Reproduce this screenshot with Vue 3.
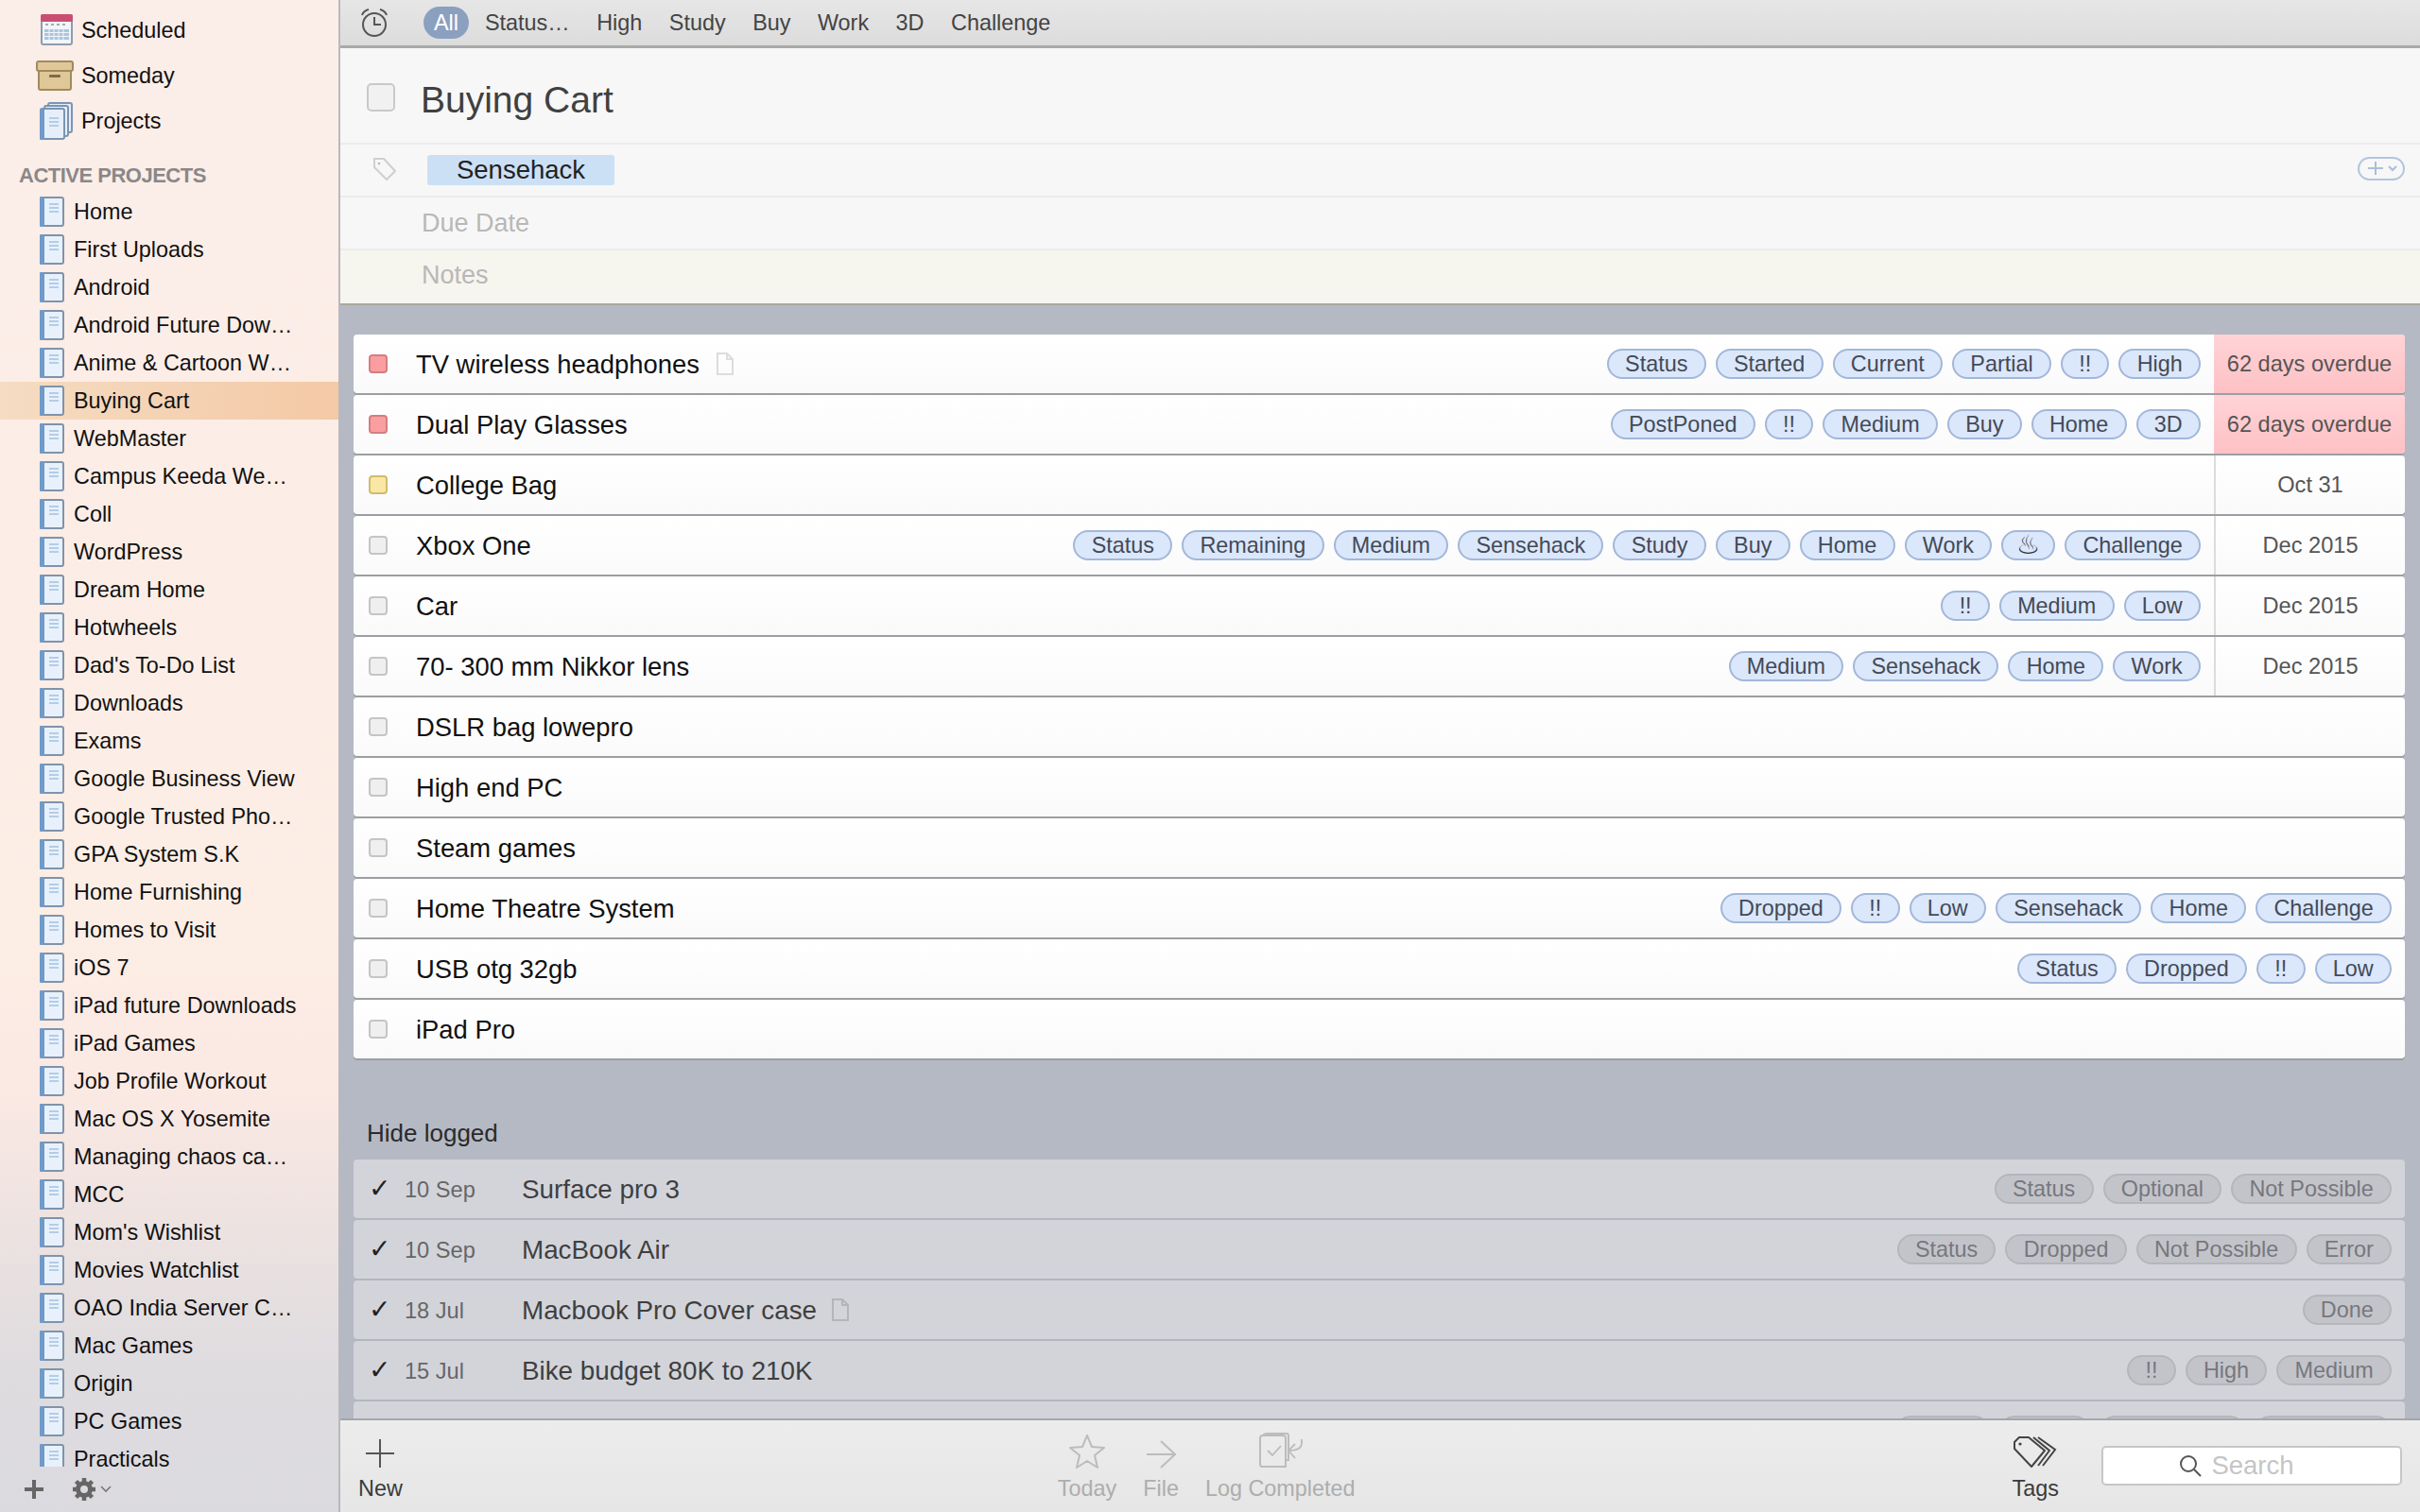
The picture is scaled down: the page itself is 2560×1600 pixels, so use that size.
<script setup>
const projects = [
  "Home", "First Uploads", "Android", "Android Future Dow…", "Anime & Cartoon W…", "Buying Cart", "WebMaster",
  "Campus Keeda We…", "Coll", "WordPress", "Dream Home", "Hotwheels", "Dad's To-Do List", "Downloads", "Exams",
  "Google Business View", "Google Trusted Pho…", "GPA System S.K", "Home Furnishing", "Homes to Visit", "iOS 7",
  "iPad future Downloads", "iPad Games", "Job Profile Workout", "Mac OS X Yosemite", "Managing chaos ca…", "MCC",
  "Mom's Wishlist", "Movies Watchlist", "OAO India Server C…", "Mac Games", "Origin", "PC Games", "Practicals",
];

const filters = ["Status…", "High", "Study", "Buy", "Work", "3D", "Challenge"];

const todos = [
  { title: "TV wireless headphones", note: true, box: "red", date: "62 days overdue", overdue: true, tags: ["Status", "Started", "Current", "Partial", "!!", "High"] },
  { title: "Dual Play Glasses", box: "red", date: "62 days overdue", overdue: true, tags: ["PostPoned", "!!", "Medium", "Buy", "Home", "3D"] },
  { title: "College Bag", box: "yellow", date: "Oct 31", tags: [] },
  { title: "Xbox One", date: "Dec 2015", tags: ["Status", "Remaining", "Medium", "Sensehack", "Study", "Buy", "Home", "Work", "♨", "Challenge"] },
  { title: "Car", date: "Dec 2015", tags: ["!!", "Medium", "Low"] },
  { title: "70- 300 mm Nikkor lens", date: "Dec 2015", tags: ["Medium", "Sensehack", "Home", "Work"] },
  { title: "DSLR bag lowepro", tags: [] },
  { title: "High end PC", tags: [] },
  { title: "Steam games", tags: [] },
  { title: "Home Theatre System", tags: ["Dropped", "!!", "Low", "Sensehack", "Home", "Challenge"] },
  { title: "USB otg 32gb", tags: ["Status", "Dropped", "!!", "Low"] },
  { title: "iPad Pro", tags: [] },
];

const logged = [
  { day: "10 Sep", title: "Surface pro 3", tags: ["Status", "Optional", "Not Possible"] },
  { day: "10 Sep", title: "MacBook Air", tags: ["Status", "Dropped", "Not Possible", "Error"] },
  { day: "18 Jul", title: "Macbook Pro Cover case", note: true, tags: ["Done"] },
  { day: "15 Jul", title: "Bike budget 80K to 210K", tags: ["!!", "High", "Medium"] },
];

// last logged row is cut off by the bottom bar, only the pill tops show
const cutOffPills = [100, 96, 154, 145];
</script>

<template>
  <div class="app">
    <aside class="sidebar">
      <div class="side-scroll">
        <div class="smart-item">
          <svg class="smart-icon" width="36" height="34" viewBox="0 0 36 34">
            <rect x="2" y="1" width="32" height="31" rx="2" fill="#f2f5f9" stroke="#8d9db0" stroke-width="2" />
            <rect x="1" y="0" width="34" height="8" rx="2" fill="#c94f72" />
            <path d="M6 11h24" stroke="#a9a9a9" stroke-width="2" stroke-dasharray="3 3" />
            <path d="M5 16h26v11H5z" fill="#a9c5e4" />
            <path d="M5 19.5h26M5 23.5h26M10 16v11M15 16v11M20 16v11M25 16v11" stroke="#f2f5f9" stroke-width="1" />
          </svg>
          <span>Scheduled</span>
        </div>
        <div class="smart-item">
          <svg class="crate" width="40" height="32" viewBox="0 0 40 32">
            <rect x="3" y="8" width="34" height="23" rx="2" fill="#dfc797" stroke="#a08a5f" stroke-width="2" />
            <rect x="1" y="1" width="38" height="10" rx="2" fill="#dfc797" stroke="#a08a5f" stroke-width="2" />
            <rect x="14" y="15" width="12" height="3" rx="1" fill="#7f6b45" />
          </svg>
          <span>Someday</span>
        </div>
        <div class="smart-item">
          <svg class="smart-icon" width="36" height="40" viewBox="0 0 36 40">
            <rect x="9" y="1" width="25" height="31" rx="2" fill="#e6eff9" stroke="#7c94b2" stroke-width="2" />
            <rect x="5" y="4" width="25" height="32" rx="2" fill="#e6eff9" stroke="#7c94b2" stroke-width="2" />
            <rect x="1" y="7" width="25" height="32" rx="2" fill="#e6eff9" stroke="#7c94b2" stroke-width="2" />
            <rect x="0" y="7" width="5" height="33" rx="1" fill="#6f9ac9" />
            <path d="M10 17h10M10 21h10M10 25h10" stroke="#b3cde8" stroke-width="2" />
          </svg>
          <span>Projects</span>
        </div>
        <div class="side-heading">ACTIVE PROJECTS</div>
        <div v-for="name in projects" :key="name" class="project" :class="{ selected: name === 'Buying Cart' }">
          <svg width="26" height="32" viewBox="0 0 26 32">
            <rect x="1" y="1" width="24" height="30" rx="2" fill="#e8f1fb" stroke="#7f93ab" stroke-width="2" />
            <rect x="0" y="0" width="5" height="32" rx="1" fill="#6f9ac9" />
            <path d="M10 8h10M10 12h10M10 16h10" stroke="#b3cde8" stroke-width="2" />
          </svg>
          <span>{{ name }}</span>
        </div>
      </div>
      <div class="side-foot">
        <svg width="22" height="22" viewBox="0 0 22 22"><path d="M11 1v20M1 11h20" stroke="#666" stroke-width="4" /></svg>
        <svg class="gear" width="26" height="26" viewBox="0 0 26 26">
          <circle cx="13" cy="13" r="6.5" fill="none" stroke="#666" stroke-width="5" />
          <path d="M13 1v5M13 20v5M1 13h5M20 13h5M4.5 4.5l3.6 3.6M17.9 17.9l3.6 3.6M21.5 4.5l-3.6 3.6M8.1 17.9l-3.6 3.6" stroke="#666" stroke-width="4.5" />
        </svg>
        <svg width="12" height="8" viewBox="0 0 12 8"><path d="M1 1l5 5 5-5" fill="none" stroke="#777" stroke-width="1.6" /></svg>
      </div>
    </aside>

    <main class="main">
      <div class="toolbar">
        <svg class="alarm" width="32" height="30" viewBox="0 0 32 30">
          <circle cx="16" cy="17" r="12" fill="none" stroke="#555" stroke-width="2" />
          <path d="M16 9v8h7M3 7c1-3 3-5 7-6M29 7c-1-3-3-5-7-6" fill="none" stroke="#555" stroke-width="2" />
        </svg>
        <span class="filter active">All</span>
        <span v-for="f in filters" :key="f" class="filter">{{ f }}</span>
      </div>

      <section class="head">
        <div class="title-row">
          <span class="big-check"></span>
          <h1>Buying Cart</h1>
        </div>
        <div class="field tag-field">
          <svg class="tag-icon" width="26" height="26" viewBox="0 0 26 26">
            <path d="M2 2h10l12 13-9 9L2 11z" fill="none" stroke="#cfcfcf" stroke-width="2" stroke-linejoin="round" />
            <circle cx="7" cy="7" r="1.3" fill="#bbb" />
          </svg>
          <span class="token">Sensehack</span>
          <span class="add-tag">
            <svg width="20" height="16" viewBox="0 0 20 16"><path d="M10 1v14M2 8h16" stroke="#a9bedb" stroke-width="2" /></svg>
            <svg width="10" height="7" viewBox="0 0 10 7"><path d="M1 1l4 4 4-4" fill="none" stroke="#a9bedb" stroke-width="2" /></svg>
          </span>
        </div>
        <div class="field">Due Date</div>
        <div class="field notes">Notes</div>
      </section>

      <div class="content">
        <div class="todo-list">
          <div v-for="todo in todos" :key="todo.title" class="todo">
            <span class="box" :class="todo.box"></span>
            <span class="todo-title">{{ todo.title }}</span>
            <svg v-if="todo.note" class="note" width="18" height="24" viewBox="0 0 18 24">
              <path d="M1 1h10l6 6v16H1zM11 1v6h6" fill="none" stroke="#dcdcdc" stroke-width="2" />
            </svg>
            <div class="tags">
              <span v-for="t in todo.tags" :key="t" class="pill" :class="{ hot: t === '♨' }">{{ t }}</span>
            </div>
            <div v-if="todo.date" class="due" :class="{ overdue: todo.overdue }">{{ todo.date }}</div>
          </div>
        </div>

        <div class="hide-logged">Hide logged</div>
        <div class="logged-list">
          <div v-for="item in logged" :key="item.title" class="logged">
            <span class="tick">✓</span>
            <span class="day">{{ item.day }}</span>
            <span class="logged-title">{{ item.title }}</span>
            <svg v-if="item.note" class="note" width="18" height="24" viewBox="0 0 18 24">
              <path d="M1 1h10l6 6v16H1zM11 1v6h6" fill="none" stroke="#b4b5ba" stroke-width="2" />
            </svg>
            <div class="tags">
              <span v-for="t in item.tags" :key="t" class="pill">{{ t }}</span>
            </div>
          </div>
          <div class="logged">
            <div class="tags">
              <span v-for="w in cutOffPills" :key="w" class="pill" :style="{ width: w + 'px' }"></span>
            </div>
          </div>
        </div>
      </div>

      <div class="bottom">
        <div class="tool tool-new">
          <svg width="32" height="32" viewBox="0 0 32 32"><path d="M16 1v30M1 16h30" stroke="#555" stroke-width="2" /></svg>
          <span>New</span>
        </div>
        <div class="mid-tools">
          <div class="tool off">
            <svg width="38" height="36" viewBox="0 0 38 36">
              <path d="M19 1l5 12 13 1-10 8 3 13-11-7-11 7 3-13-10-8 13-1z" fill="none" stroke="#bcbcbc" stroke-width="2" stroke-linejoin="round" />
            </svg>
            <span>Today</span>
          </div>
          <div class="tool off">
            <svg width="32" height="30" viewBox="0 0 32 30"><path d="M1 15h30M16 1l15 14-15 14" fill="none" stroke="#bcbcbc" stroke-width="2" /></svg>
            <span>File</span>
          </div>
          <div class="tool off">
            <svg width="48" height="38" viewBox="0 0 48 38">
              <path d="M3 6q0-3 3-3h21q3 0 3 3v30H5q-2 0-2-3z" fill="none" stroke="#bcbcbc" stroke-width="2" />
              <path d="M6 3q1-2 4-2h21q2 0 2 2v26h-3" fill="none" stroke="#bcbcbc" stroke-width="2" />
              <path d="M11 19l5 5 9-10" fill="none" stroke="#bcbcbc" stroke-width="1.8" />
              <path d="M47 7v4q0 8-14 8M40 12l-7 7 7 8" fill="none" stroke="#bcbcbc" stroke-width="1.8" />
            </svg>
            <span>Log Completed</span>
          </div>
        </div>
        <div class="tool tool-tags">
          <svg width="46" height="34" viewBox="0 0 46 34">
            <path d="M1 6l5-5h10l17 14-14 17L1 13z" fill="none" stroke="#444" stroke-width="2" stroke-linejoin="round" />
            <path d="M21 1l17 14-12 16M26 1l18 13-13 17" fill="none" stroke="#444" stroke-width="2" />
            <circle cx="7" cy="8" r="1.6" fill="#444" />
          </svg>
          <span>Tags</span>
        </div>
        <div class="search">
          <svg width="24" height="24" viewBox="0 0 24 24">
            <circle cx="10" cy="10" r="8" fill="none" stroke="#555" stroke-width="2" />
            <path d="M16 16l7 7" stroke="#555" stroke-width="2" />
          </svg>
          <span>Search</span>
        </div>
      </div>
    </main>
  </div>
</template>

<style>
html,
body {
  margin: 0;
  background: #fff;
}
</style>

<style scoped>
.app {
  width: 2560px;
  height: 1600px;
  display: flex;
  overflow: hidden;
  font-family: "Liberation Sans", Arial, sans-serif;
  font-size: 23.4px;
}

/* sidebar */
.sidebar {
  width: 358px;
  flex: none;
  display: flex;
  flex-direction: column;
  border-right: 2px solid #b9b9bb;
  background: linear-gradient(180deg, #fbede8 0%, #fceee5 60%, #fbe9e3 72%, #dfdcdf 90%, #dbdadf 100%);
  box-sizing: content-box;
}

.side-scroll {
  height: 1552px;
  overflow: hidden;
  padding-top: 8px;
  box-sizing: border-box;
}

.smart-item {
  height: 48px;
  display: flex;
  align-items: center;
  padding-left: 42px;
  color: #111;
}

.smart-item span {
  margin-left: 8px;
}

.smart-icon {
  flex: none;
  width: 36px;
}

.crate {
  flex: none;
  margin-left: -4px;
}

.side-heading {
  margin-top: 16px;
  height: 36px;
  line-height: 36px;
  padding-left: 20px;
  font-size: 22px;
  font-weight: 700;
  letter-spacing: -0.5px;
  color: #8a8787;
}

.project {
  height: 40px;
  display: flex;
  align-items: center;
  gap: 10px;
  padding-left: 42px;
  color: #111;
  white-space: nowrap;
}

.project.selected {
  background: linear-gradient(90deg, #f5dcc2, #f4c9a6);
}

.side-foot {
  flex: 1;
  display: flex;
  align-items: center;
  padding-left: 25px;
}

.gear {
  margin-left: 29px;
}

.side-foot svg:last-child {
  margin-left: 4px;
}

/* main column */
.main {
  flex: 1;
  min-width: 0;
  display: flex;
  flex-direction: column;
}

.toolbar {
  height: 48px;
  flex: none;
  display: flex;
  align-items: center;
  padding-left: 20px;
  background: linear-gradient(180deg, #e6e6e6, #dcdcdc);
  border-bottom: 3px solid #a9a9aa;
  color: #444;
}

.alarm {
  margin-right: 36px;
}

.filter {
  margin-right: 28.5px;
}

.filter.active {
  margin-right: 17px;
  width: 48px;
  height: 34px;
  line-height: 34px;
  text-align: center;
  border-radius: 17px;
  background: #8ba0bf;
  color: #fff;
}

.head {
  flex: none;
  background: #f7f7f7;
  border-bottom: 2px solid #a9a89f;
}

.title-row {
  height: 102px;
  display: flex;
  align-items: center;
  padding: 4px 0 0 28px;
  border-bottom: 2px solid #ececec;
  box-sizing: border-box;
}

.big-check {
  width: 30px;
  height: 30px;
  box-sizing: border-box;
  border: 2px solid #c9c9c9;
  border-radius: 5px;
  background: #f1f1f1;
  margin-right: 27px;
}

h1 {
  margin: 6px 0 0;
  font-size: 39px;
  font-weight: 400;
  color: #404040;
}

.field {
  height: 56px;
  display: flex;
  align-items: center;
  padding-left: 86px;
  font-size: 27px;
  color: #b8b8b8;
  border-bottom: 2px solid #ececec;
  box-sizing: border-box;
}

.field.notes {
  padding-bottom: 4px;
  background: #f6f5ee;
  border-bottom: none;
}

.tag-field {
  padding-left: 34px;
}

.tag-icon {
  margin: 0 32px 3px 0;
}

.token {
  width: 198px;
  height: 32px;
  line-height: 32px;
  text-align: center;
  font-size: 27.5px;
  color: #222;
  background: #cbe0f5;
  border-radius: 3px;
}

.add-tag {
  margin: 0 16px 4px auto;
  width: 50px;
  height: 25px;
  box-sizing: border-box;
  display: flex;
  align-items: center;
  justify-content: center;
  gap: 3px;
  border: 2px solid #b2c5de;
  border-radius: 13px;
}

.content {
  flex: 1;
  min-height: 0;
  overflow: hidden;
  padding: 31px 16px 0 14px;
  background: #b5b9c4;
}

.todo-list,
.logged-list {
  display: flex;
  flex-direction: column;
  gap: 2px;
}

.todo {
  height: 62px;
  display: flex;
  align-items: center;
  padding-left: 16px;
  background: linear-gradient(180deg, #fff, #fafafa);
  border-radius: 4px;
  box-shadow: 0 2px 0 #9d9ea3;
  font-size: 27.4px;
  color: #111;
}

.todo-title {
  margin-top: 2px;
}

.box {
  width: 20px;
  height: 20px;
  flex: none;
  box-sizing: border-box;
  border: 2px solid #c5c5c5;
  border-radius: 4px;
  background: #efefef;
  margin-right: 30px;
}

.box.red {
  background: #fb9ea0;
  border-color: #d37e80;
}

.box.yellow {
  background: #fbe7a4;
  border-color: #cfbb6e;
}

.note {
  margin-left: 18px;
  flex: none;
}

.tags {
  margin-left: auto;
  display: flex;
  gap: 10px;
  padding-right: 14px;
}

.pill {
  height: 32px;
  line-height: 28px;
  box-sizing: border-box;
  padding: 0 17.25px;
  border: 2px solid #a3b7d9;
  border-radius: 16px;
  background: #dbe7fb;
  font-size: 23.4px;
  color: #434a57;
}

.pill.hot {
  padding: 0 14px;
  font-size: 28px;
  color: #2f3540;
}

.due {
  width: 202px;
  height: 100%;
  flex: none;
  display: flex;
  align-items: center;
  justify-content: center;
  border-left: 2px solid #dcdcdc;
  box-sizing: border-box;
  border-radius: 0 4px 4px 0;
  font-size: 23.6px;
  color: #555;
}

.due.overdue {
  border-left: none;
  background: linear-gradient(180deg, #ffd3d6, #fdc1c5);
}

.hide-logged {
  margin-top: 64px;
  height: 43px;
  padding-left: 14px;
  font-size: 26px;
  color: #2a2a2a;
}

.logged {
  height: 62px;
  flex: none;
  display: flex;
  align-items: center;
  padding-left: 16px;
  background: #d3d4da;
  border-radius: 4px;
  box-shadow: 0 2px 0 #b3b5bf;
}

.tick {
  width: 38px;
  flex: none;
  font-family: "DejaVu Sans", sans-serif;
  font-size: 28px;
  line-height: 32px;
  color: #222;
}

.day {
  width: 124px;
  flex: none;
  margin-top: 2px;
  font-size: 23.6px;
  color: #666;
}

.logged-title {
  margin-top: 2px;
  font-size: 27.8px;
  color: #3f3f3f;
}

.logged .note {
  margin-left: 16px;
}

.logged .pill {
  background: #c3c4c9;
  border-color: #b5b6bb;
  color: #77777f;
}

/* bottom bar */
.bottom {
  height: 99px;
  flex: none;
  display: flex;
  align-items: center;
  padding-bottom: 4px;
  background: linear-gradient(180deg, #ececec, #e6e6e6);
  border-top: 2px solid #a5a6ab;
  box-sizing: border-box;
}

.tool {
  display: flex;
  flex-direction: column;
  align-items: center;
  justify-content: flex-end;
  height: 78px;
  color: #3a3a3a;
  white-space: nowrap;
}

.tool svg {
  margin-bottom: 8px;
}

.tool.off {
  color: #adadad;
}

.tool-new {
  margin-left: 19px;
}

.mid-tools {
  display: flex;
  gap: 28px;
  margin-left: 693px;
}

.tool-tags {
  margin-left: auto;
}

.search {
  width: 318px;
  height: 42px;
  margin: 2px 19px 0 45px;
  padding-right: 32px;
  box-sizing: border-box;
  display: flex;
  align-items: center;
  justify-content: center;
  gap: 10px;
  background: #fff;
  border: 2px solid #c6c6c6;
  border-radius: 5px;
  font-size: 27.5px;
  color: #c5c5c5;
}
</style>
